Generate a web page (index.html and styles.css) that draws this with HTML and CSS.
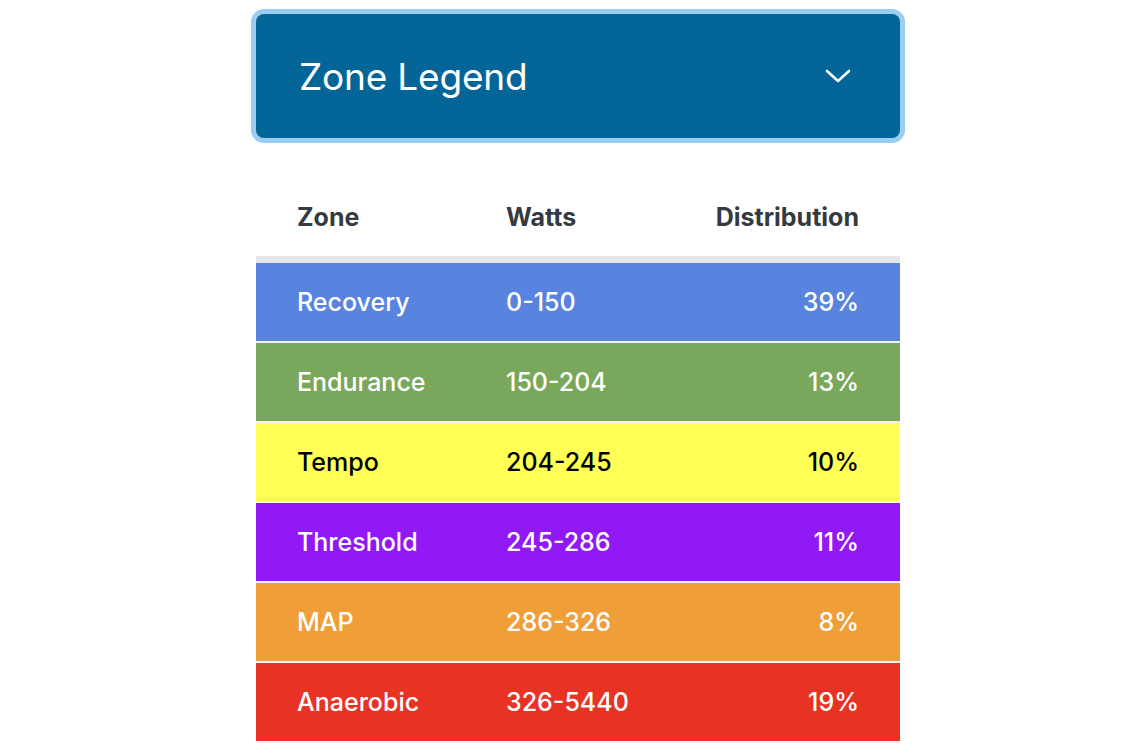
FILE: index.html
```html
<!DOCTYPE html>
<html lang="en">
<head>
<meta charset="utf-8">
<title>Zone Legend</title>
<link rel="stylesheet" href="styles.css">
</head>
<body>
<div class="wrap">
  <button class="legend-toggle" type="button">
    <span class="legend-title">Zone Legend</span>
    <svg class="chevron" width="26" height="16" viewBox="0 0 26 16" aria-hidden="true">
      <path d="M2 3 L13 13 L24 3" fill="none" stroke="#fff" stroke-width="2.6" stroke-linecap="round" stroke-linejoin="round"/>
    </svg>
  </button>
  <table class="zones">
    <thead>
      <tr><th class="c-zone">Zone</th><th class="c-watts">Watts</th><th class="c-dist">Distribution</th></tr>
    </thead>
    <tbody>
      <tr class="z-recovery"><td>Recovery</td><td>0-150</td><td class="c-dist">39%</td></tr>
      <tr class="z-endurance"><td>Endurance</td><td>150-204</td><td class="c-dist">13%</td></tr>
      <tr class="z-tempo"><td>Tempo</td><td>204-245</td><td class="c-dist">10%</td></tr>
      <tr class="z-threshold"><td>Threshold</td><td>245-286</td><td class="c-dist">11%</td></tr>
      <tr class="z-map"><td>MAP</td><td>286-326</td><td class="c-dist">8%</td></tr>
      <tr class="z-anaerobic"><td>Anaerobic</td><td>326-5440</td><td class="c-dist">19%</td></tr>
    </tbody>
  </table>
</div>
</body>
</html>
```

FILE: styles.css
```css
html, body {
  margin: 0;
  padding: 0;
  background: #fff;
}
body {
  font-family: Inter, "Helvetica Neue", Arial, sans-serif;
}
.wrap {
  width: 644px;
  margin-left: 256px;
  padding-top: 14px;
}
.legend-toggle {
  display: flex;
  align-items: center;
  justify-content: space-between;
  width: 644px;
  height: 124px;
  box-sizing: border-box;
  padding: 0 49px 0 43px;
  background: #036598;
  color: #fff;
  border: none;
  border-radius: 8px;
  box-shadow: 0 0 0 5px #9bcdf1;
  font-family: inherit;
  cursor: pointer;
}
.legend-title {
  font-size: 37px;
  font-weight: 400;
  letter-spacing: -0.2px;
}
.chevron {
  display: block;
}
.zones {
  width: 644px;
  margin-top: 40px;
  border-collapse: collapse;
  table-layout: fixed;
  font-size: 25px;
}
.zones th, .zones td {
  padding: 0 41px;
  text-align: left;
  white-space: nowrap;
}
.zones th {
  height: 78px;
  color: #343a40;
  font-weight: 700;
  border-bottom: 7px solid #e6e7ec;
}
.zones td {
  height: 78px;
  color: #fff;
  font-weight: 500;
  border-bottom: 2px solid #f3f3f5;
}
.zones th.c-zone { width: 127px; }
.zones th.c-watts { width: 120px; }
.zones .c-dist { text-align: right; }
.z-recovery { background: #5884e0; }
.z-endurance { background: #79a75c; }
.z-tempo { background: #ffff55; }
.z-tempo td { color: #000; }
.z-threshold { background: #9119f5; }
.z-map { background: #f09e38; }
.z-anaerobic { background: #e83324; }
```
